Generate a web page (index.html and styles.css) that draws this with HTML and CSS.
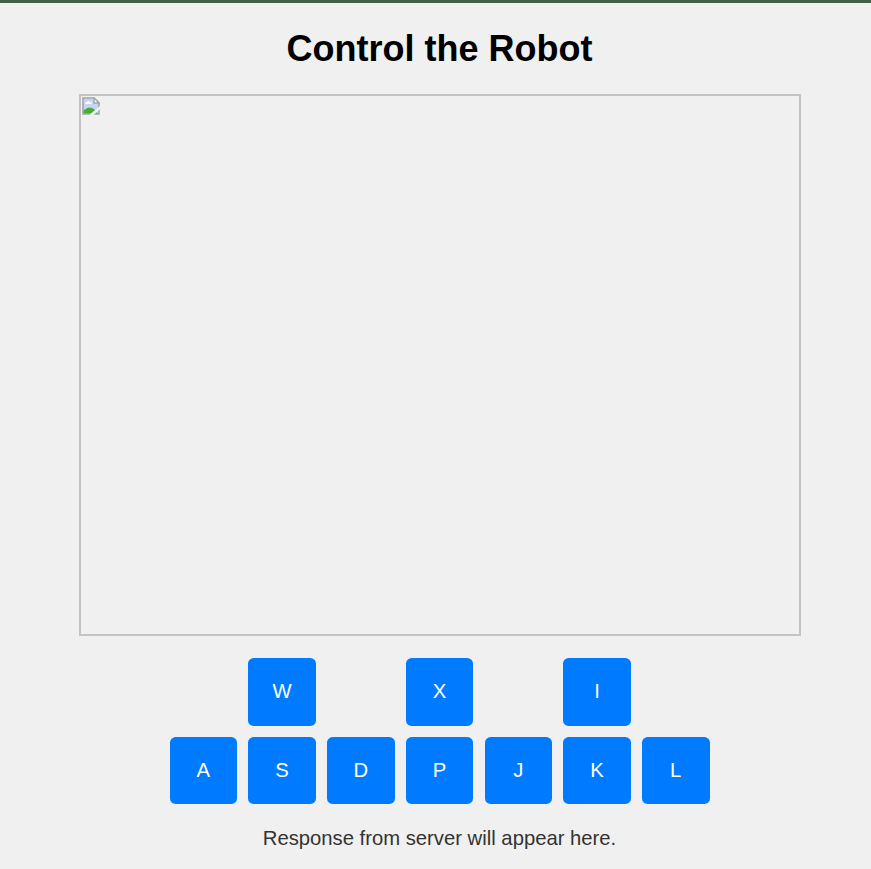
FILE: index.html
```html
<!DOCTYPE html>
<html lang="en">
<head>
<meta charset="utf-8">
<title>Control the Robot</title>
<link rel="stylesheet" href="styles.css">
</head>
<body>
<h1>Control the Robot</h1>
<div class="stream">
<svg class="broken" viewBox="0 0 18 18" width="18" height="18"><path d="M1 1h11l5 5v11H1z" fill="#c3d6f8"/><path d="M1 17v-3q6-6 11-2l4 5z" fill="#46ad32"/><path d="M3 7q0-2 2-2 1-2 3 0 2 0 2 2z" fill="#fff"/><path d="M1 1h11l5 5v11H1z" fill="none" stroke="#a5a5a5" stroke-width="1.6"/><path d="M12 1v5h5z" fill="#fff" stroke="#a5a5a5" stroke-width="1.3"/><path d="M18 9v3.2L11.5 18H7.5l2-2z" fill="#f0f0f0"/></svg>
</div>
<div class="keys">
<button class="w">W</button><button class="x">X</button><button class="i">I</button>
<button class="a">A</button><button>S</button><button>D</button><button>P</button><button>J</button><button>K</button><button>L</button>
</div>
<p class="response">Response from server will appear here.</p>
</body>
</html>
```
FILE: styles.css
```css
* { box-sizing: border-box; }
body { margin: 0; height: 869px; padding: 25px 0 0 8px; overflow: hidden; border-top: 3px solid #465f4b; background: #f0f0f0; font-family: "Liberation Sans", Arial, sans-serif; display: flex; flex-direction: column; align-items: center; }
h1 { margin: 0; font-size: 36px; line-height: 42px; color: #000; }
.stream { width: 722px; height: 542px; margin-top: 24px; padding: 1px; border: 2px solid #c3c3c3; flex: none; }
.broken { display: block; }
.keys { display: grid; grid-template-columns: repeat(7, 67.5px); grid-auto-rows: 67.5px; gap: 11.25px; margin-top: 22px; }
button { border: 0; border-radius: 5.6px; padding: 0; background: #007bff; color: #fff; font: 20.25px "Liberation Sans", Arial, sans-serif; }
.w { grid-column: 2; }
.x { grid-column: 4; }
.i { grid-column: 6; }
.a { grid-column: 1; }
.response { margin: 22px 0 0; font-size: 20.25px; line-height: 24px; color: #333; }
```
